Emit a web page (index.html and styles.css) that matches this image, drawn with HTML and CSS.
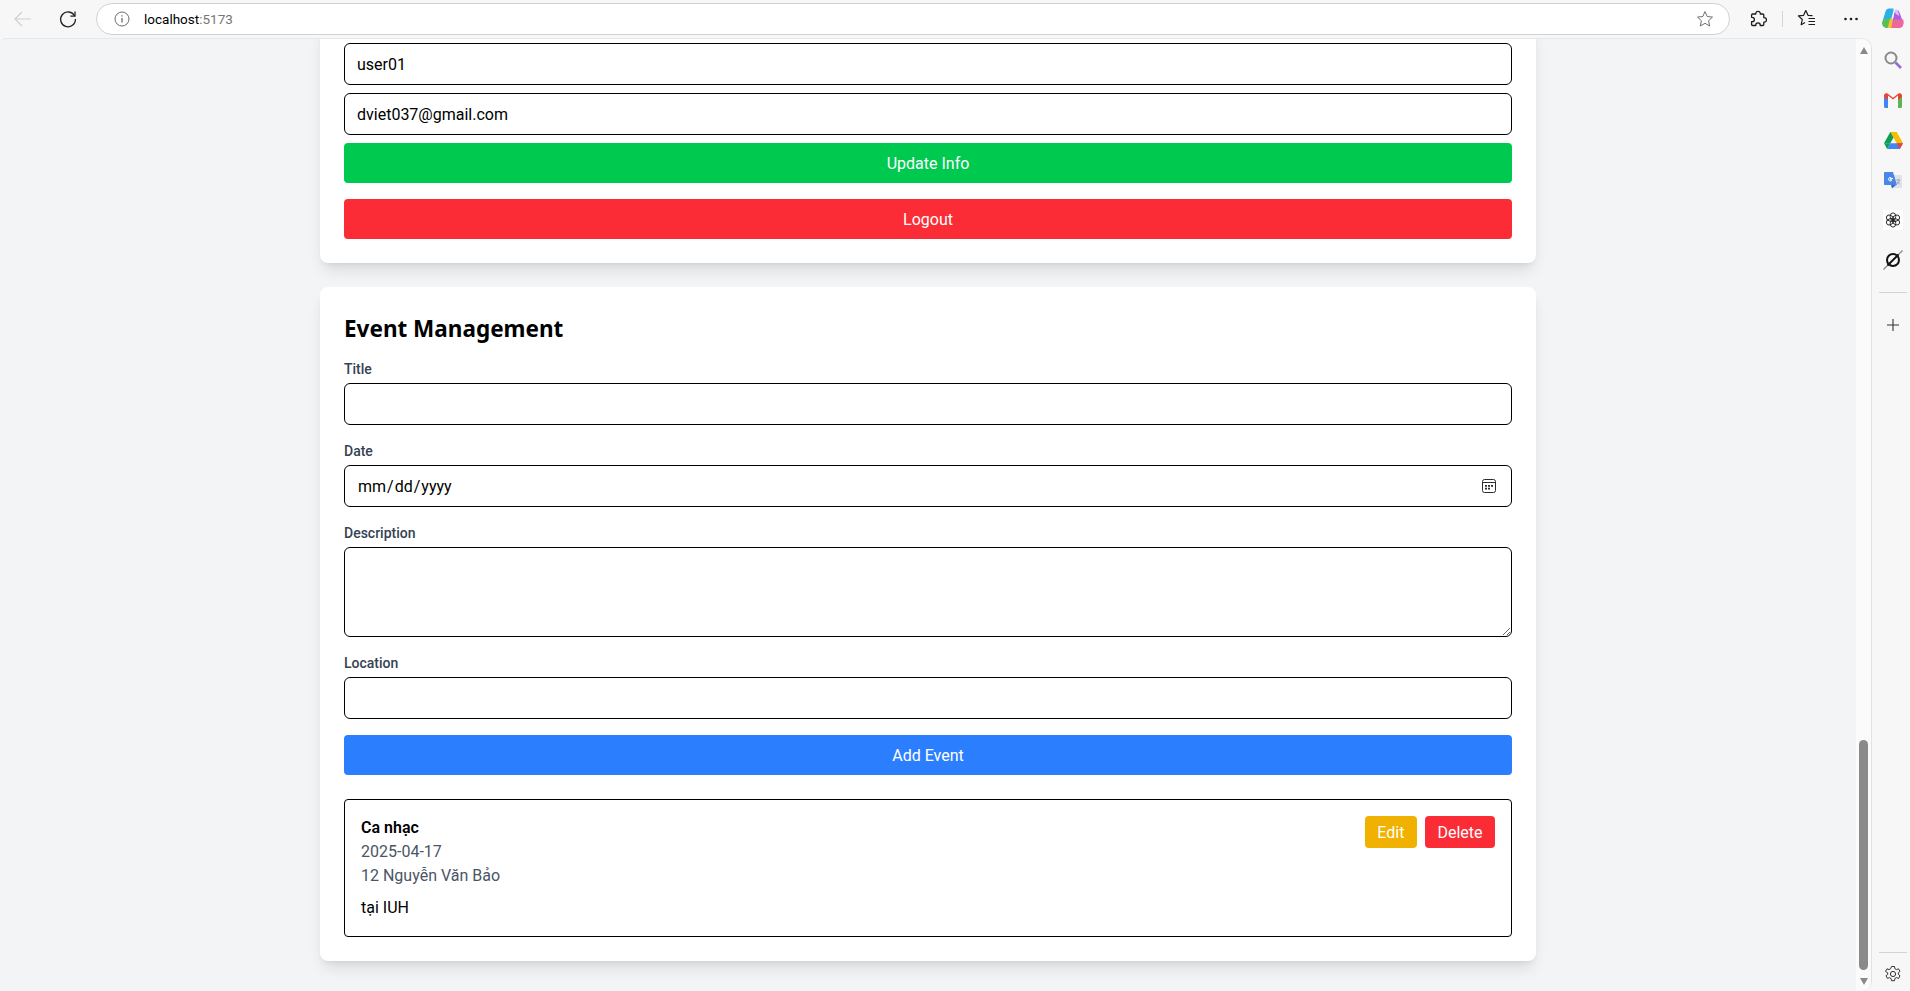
FILE: index.html
```html
<!DOCTYPE html>
<html lang="vi">
<head>
    <meta charset="UTF-8">
    <title>localhost:5173</title>
    <link rel="stylesheet" href="styles.css">
</head>
<body>
    <!-- thanh trình duyệt -->
    <header class="toolbar">
        <span class="tool tool-back">
            <svg width="20" height="20" viewBox="0 0 20 20" fill="none" stroke="#cfcfcf" stroke-width="1.2"><path d="M18 10H2M9 3l-7 7 7 7"/></svg>
        </span>
        <span class="tool tool-reload">
            <svg width="20" height="20" viewBox="0 0 20 20" fill="none" stroke="#222" stroke-width="1.3"><path d="M16.600 7A7.400 7.400 0 1 0 17.400 10"/><path d="M17 2.600V7.200H12.400"/></svg>
        </span>
        <div class="address">
            <svg class="info" width="16" height="16" viewBox="0 0 16 16" fill="none" stroke="#6b6b6b" stroke-width="1"><circle cx="8" cy="8" r="7"/><path d="M8 7v4.600" stroke-width="1.300"/><path d="M8 4.200v1.400" stroke-width="1.300"/></svg>
            <span class="url">localhost<span class="url-port">:5173</span></span>
            <svg class="star" width="18" height="18" viewBox="0 0 18 18" fill="none" stroke="#6f6f6f" stroke-width="1"><path d="M9 1.600l2.200 4.900 5.300.6-3.900 3.600 1.100 5.300L9 13.300l-4.700 2.700 1.100-5.300L1.500 7.100l5.300-.6z"/></svg>
        </div>
        <span class="tool tool-ext">
            <svg width="18" height="18" viewBox="0 0 18 18" fill="none" stroke="#1c1c1c" stroke-width="1.300" stroke-linejoin="round"><path d="M6.800 3.200a2.300 2.300 0 0 1 4.500 0V4h2.500c.6 0 1 .4 1 1v2.600h.4a2.300 2.300 0 0 1 0 4.600h-.4v2.300c0 .6-.4 1-1 1h-2.600v-.5a2.200 2.200 0 0 0-4.400 0v.5H3.600c-.6 0-1-.4-1-1v-2.800h.6a2.200 2.200 0 0 0 0-4.400h-.6V5c0-.6.4-1 1-1h3.200z"/></svg>
        </span>
        <span class="tool-sep"></span>
        <span class="tool tool-favs">
            <svg width="20" height="20" viewBox="0 0 20 20" fill="none" stroke="#1c1c1c" stroke-width="1.200" stroke-linejoin="round"><path d="M15.500 6.700L11 6.300 8.800 1.500 6.600 6.300l-5.200.6 3.900 3.600-1.100 5.200 3.800-2.200"/><path d="M11.500 9.500H18M11.500 12.500H18M11.500 15.500H18"/></svg>
        </span>
        <span class="tool tool-more">
            <svg width="16" height="4" viewBox="0 0 16 4" fill="#1c1c1c"><circle cx="2.500" cy="2" r="1.300"/><circle cx="8" cy="2" r="1.300"/><circle cx="13.500" cy="2" r="1.300"/></svg>
        </span>
        <span class="tool tool-copilot">
            <svg width="22" height="22" viewBox="0 0 22 22">
                <path d="M7 0.500h5L7 20H5C1.500 20 -.5 16.500 .5 13.500L3.500 3.500C4 1.500 5.500 .5 7 .5z" fill="#2ab1e8"/>
                <path d="M.5 13.500C2 11 4.500 10.500 8 10.500L5.500 20H5C1.500 20 -.5 16.500 .5 13.500z" fill="#58c04e"/>
                <path d="M8 10.500h4.500L10 20H5.500z" fill="#f5c02c"/>
                <path d="M13 1.500c2.500 0 4 1 4.500 3L21 14c1 3-1 6-4 6H9.500z" fill="#a85fe6"/>
                <path d="M12 11.500h9.300c1.200 4-1 8.500-4.300 8.500H9.500z" fill="#f0689a"/>
                <path d="M11 .5h1.500c1.800 0 3.100 1 3.600 2.800l1.200 4.400C15 7.500 14 6 13 4.500z" fill="#ffffff" opacity=".6"/>
            </svg>
        </span>
    </header>

    <div class="workspace">
        <div class="viewport">
            <main class="page">
                <section class="card">
                    <div class="profile-form">
                        <input class="field" type="text" value="user01">
                        <input class="field" type="text" value="dviet037@gmail.com">
                        <button class="btn btn-green">Update Info</button>
                        <button class="btn btn-red btn-logout">Logout</button>
                    </div>
                </section>

                <section class="card">
                    <h2 class="card-title">Event Management</h2>
                    <form class="event-form">
                        <div class="form-row">
                            <label class="form-label">Title</label>
                            <input class="field" type="text">
                        </div>
                        <div class="form-row">
                            <label class="form-label">Date</label>
                            <div class="date-wrap">
                                <input class="field field-date" type="date">
                                <svg class="date-icon" width="14" height="14" viewBox="0 0 14 14" fill="none" stroke="#2b2b2b" stroke-width="1"><rect x=".5" y=".5" width="13" height="13" rx="2"/><path d="M.5 3.500h13"/><path d="M3 6.800h2M6 6.800h2M9 6.800h2M3 9.600h2M6 9.600h2" stroke-width="1.800"/></svg>
                            </div>
                        </div>
                        <div class="form-row">
                            <label class="form-label">Description</label>
                            <textarea class="field field-area"></textarea>
                        </div>
                        <div class="form-row">
                            <label class="form-label">Location</label>
                            <input class="field" type="text">
                        </div>
                        <button class="btn btn-blue" type="button">Add Event</button>
                    </form>

                    <article class="event">
                        <div class="event-info">
                            <h3 class="event-name">Ca nhạc</h3>
                            <p class="event-meta">2025-04-17</p>
                            <p class="event-meta">12 Nguyễn Văn Bảo</p>
                            <p class="event-desc">tại IUH</p>
                        </div>
                        <div class="event-actions">
                            <button class="btn-small btn-yellow">Edit</button>
                            <button class="btn-small btn-red">Delete</button>
                        </div>
                    </article>
                </section>
            </main>
            <div class="scrollbar">
                <span class="arrow arrow-up"></span>
                <span class="thumb"></span>
                <span class="arrow arrow-down"></span>
            </div>
        </div>

        <!-- thanh bên Edge -->
        <aside class="sidebar">
            <span class="side-item">
                <svg width="20" height="20" viewBox="0 0 20 20" fill="none"><circle cx="8" cy="8" r="5.500" stroke="#8a8a8a" stroke-width="2"/><path d="M12.500 12.500L18 18" stroke="#9a6cd8" stroke-width="2.600"/></svg>
            </span>
            <span class="side-item">
                <svg width="18" height="15" viewBox="0 0 18 15" fill="none"><path d="M0 3v10.500c0 .8.600 1.500 1.400 1.500H4V6z" fill="#4285f4"/><path d="M14 6v9h2.600c.8 0 1.400-.7 1.400-1.500V3z" fill="#5ab552"/><path d="M0 2.500C0 .6 2 -.5 3.500 .6L9 4.800 14.500 .6C16 -.5 18 .6 18 2.500V4L14 7V2.500L9 6.500 4 2.500V7L0 4z" fill="#ea4335"/></svg>
            </span>
            <span class="side-item">
                <svg width="19" height="17" viewBox="0 0 19 17"><path d="M6.300 0h6.400L6.300 11.200H0z" fill="#0f9d58"/><path d="M6.300 0h6.400l6.300 11.200h-6.400z" fill="#fbbc04"/><path d="M3.200 17L6.300 11.200H19L15.800 17z" fill="#4285f4"/><path d="M0 11.200h6.300L3.200 17z" fill="#0f9d58"/><path d="M12.700 11.200H19L15.800 17z" fill="#ea4335"/></svg>
            </span>
            <span class="side-item">
                <svg width="18" height="17" viewBox="0 0 18 17"><path d="M7 3h10c.6 0 1 .4 1 1v11c0 .6-.4 1-1 1h-7z" fill="#dfe3e8"/><path d="M1 0h8l4 13H1c-.6 0-1-.4-1-1V1c0-.6.4-1 1-1z" fill="#4a86e8"/><path d="M7 13h5l-4 3.600z" fill="#3367c8"/><path d="M9 6.500H6.300v1.300h1.500a1.700 1.700 0 1 1-.5-1.800" fill="none" stroke="#fff" stroke-width="1"/><path d="M12.500 8h3.500M14.200 7v1M15.500 8c-.4 2-1.500 3.200-3 4M13 9.500c.6 1.200 1.500 2 2.800 2.500" fill="none" stroke="#8b96a5" stroke-width=".8"/></svg>
            </span>
            <span class="side-item">
                <span class="gpt-box">
                    <svg width="16" height="16" viewBox="0 0 16 16" fill="none" stroke="#222" stroke-width=".9"><ellipse cx="8" cy="4.600" rx="2.800" ry="3.800"/><ellipse cx="8" cy="4.600" rx="2.800" ry="3.800" transform="rotate(60 8 8)"/><ellipse cx="8" cy="4.600" rx="2.800" ry="3.800" transform="rotate(120 8 8)"/><ellipse cx="8" cy="4.600" rx="2.800" ry="3.800" transform="rotate(180 8 8)"/><ellipse cx="8" cy="4.600" rx="2.800" ry="3.800" transform="rotate(240 8 8)"/><ellipse cx="8" cy="4.600" rx="2.800" ry="3.800" transform="rotate(300 8 8)"/></svg>
                </span>
            </span>
            <span class="side-item">
                <svg width="20" height="20" viewBox="0 0 20 20" fill="none"><circle cx="10" cy="10" r="6" stroke="#111" stroke-width="2"/><path d="M.5 19.500L19.500 .5" stroke="#888" stroke-width="1.200"/><path d="M4.500 15.500L15.500 4.500" stroke="#111" stroke-width="1.800"/></svg>
            </span>
            <span class="side-sep"></span>
            <span class="side-item side-plus">
                <svg width="14" height="14" viewBox="0 0 14 14" stroke="#333" stroke-width="1.100"><path d="M7 1v12M1 7h12"/></svg>
            </span>
            <span class="side-sep side-sep-bottom"></span>
            <span class="side-gear">
                <svg width="18" height="18" viewBox="0 0 18 18" fill="none" stroke="#333" stroke-width="1"><circle cx="9" cy="9" r="2.600"/><path d="M7.500 1.500h3l.4 2.200 1.500.9 2.100-.8 1.500 2.600-1.700 1.400v1.600l1.700 1.400-1.500 2.600-2.100-.8-1.500.9-.4 2.200h-3l-.4-2.200-1.500-.9-2.100.8-1.500-2.600 1.700-1.400V7.800L1.500 6.400 3 3.800l2.100.8 1.500-.9z" stroke-linejoin="round"/></svg>
            </span>
        </aside>
    </div>
</body>
</html>
```

FILE: styles.css
```css
* {
    box-sizing: border-box;
}
body {
    font-family: Roboto, "Noto Sans", sans-serif;
    margin: 0;
    height: 100vh;
    display: flex;
    flex-direction: column;
    overflow: hidden;
    background: #f7f7f7;
    color: #000;
}

/* Toolbar */
.toolbar {
    height: 38px;
    flex-shrink: 0;
    display: flex;
    align-items: center;
    padding-left: 13px;
    padding-right: 6px;
}
.tool {
    display: flex;
    align-items: center;
    justify-content: center;
}
.tool-reload {
    margin-left: 25px;
}
.address {
    flex: 1;
    height: 32px;
    margin-left: 18px;
    display: flex;
    align-items: center;
    padding-left: 17px;
    padding-right: 15px;
    background: #fff;
    border: 1px solid #d2d2d2;
    border-radius: 16px;
}
.url {
    font-size: 13.500px;
    margin-left: 14px;
    flex: 1;
}
.url-port {
    color: #767676;
}
.tool-ext {
    margin-left: 19px;
}
.tool-sep {
    width: 1px;
    height: 16px;
    background: #d4d4d4;
    margin-left: 15px;
}
.tool-favs {
    margin-left: 14px;
}
.tool-more {
    margin-left: 26px;
}
.tool-copilot {
    margin-left: 23px;
}

/* Vùng nội dung */
.workspace {
    flex: 1;
    display: flex;
    min-height: 0;
}
.viewport {
    flex: 1;
    display: flex;
    min-width: 0;
    overflow: hidden;
    background: #f3f4f6;
    border-top: 1px solid #e8e8e8;
    border-right: 1px solid #e2e2e2;
    border-radius: 6px 10px 10px 0;
}
.page {
    flex: 1;
    display: flex;
    flex-direction: column;
    justify-content: flex-end;
    align-items: center;
    gap: 24px;
    padding-bottom: 30px;
    overflow: hidden;
}
.card {
    width: 1216px;
    flex-shrink: 0;
    padding: 24px;
    background: #fff;
    border-radius: 8px;
    box-shadow: 0 10px 15px -3px rgba(0,0,0,0.1), 0 4px 6px -4px rgba(0,0,0,0.1);
}
.card-title {
    font-family: "Noto Sans", sans-serif;
    font-size: 22.500px;
    line-height: 32px;
    font-weight: 700;
    margin: 2px 0 14px;
}
.profile-form {
    display: flex;
    flex-direction: column;
    gap: 8px;
}
.btn-logout {
    margin-top: 8px;
}
.event-form {
    display: flex;
    flex-direction: column;
    gap: 16px;
}
.form-label {
    display: block;
    font-size: 14px;
    line-height: 20px;
    font-weight: 500;
    color: #364153;
    margin-bottom: 4px;
}
.field {
    display: block;
    width: 100%;
    height: 42px;
    padding: 8px 12px;
    font-family: inherit;
    font-size: 16px;
    color: #000;
    background: #fff;
    border: 1px solid #000;
    border-radius: 6px;
    outline: none;
}
.field-area {
    height: 90px;
    resize: vertical;
}
.date-wrap {
    position: relative;
}
.field-date::-webkit-calendar-picker-indicator {
    opacity: 0;
}
.date-icon {
    position: absolute;
    top: 14px;
    right: 16px;
    pointer-events: none;
}
.btn {
    height: 40px;
    width: 100%;
    border: 0;
    border-radius: 4px;
    color: #fff;
    font-family: inherit;
    font-size: 16px;
}
.btn-green {
    background: #00c950;
}
.btn-red {
    background: #fb2c36;
}
.btn-blue {
    background: #2b7fff;
}
.btn-yellow {
    background: #f0b100;
}

/* Sự kiện */
.event {
    margin-top: 24px;
    padding: 16px;
    display: flex;
    justify-content: space-between;
    align-items: flex-start;
    border: 1px solid #000;
    border-radius: 4px;
}
.event-name {
    font-size: 16px;
    line-height: 24px;
    font-weight: 600;
    margin: 0;
}
.event-meta {
    font-size: 16px;
    line-height: 24px;
    color: #4a5565;
    margin: 0;
}
.event-desc {
    font-size: 16px;
    line-height: 24px;
    margin: 8px 0 0;
}
.event-actions {
    display: flex;
    gap: 8px;
}
.btn-small {
    height: 32px;
    padding: 0 12.500px;
    border: 0;
    border-radius: 4px;
    color: #fff;
    font-family: inherit;
    font-size: 16px;
}

/* Scrollbar */
.scrollbar {
    width: 15px;
    flex-shrink: 0;
    display: flex;
    flex-direction: column;
    align-items: center;
    padding-top: 8px;
    padding-bottom: 6px;
    background: #fbfbfb;
}
.arrow {
    width: 0;
    height: 0;
    border-left: 4.500px solid transparent;
    border-right: 4.500px solid transparent;
}
.arrow-up {
    border-bottom: 7px solid #8a8a8a;
}
.arrow-down {
    border-top: 7px solid #8a8a8a;
    margin-top: 8px;
}
.thumb {
    width: 9px;
    height: 230px;
    margin-top: auto;
    border-radius: 5px;
    background: #8a8a8a;
}

/* Sidebar */
.sidebar {
    width: 38px;
    flex-shrink: 0;
    display: flex;
    flex-direction: column;
    align-items: center;
    padding-top: 2px;
    padding-left: 4px;
}
.side-item {
    height: 40px;
    flex-shrink: 0;
    display: flex;
    align-items: center;
    justify-content: center;
}
.gpt-box {
    width: 20px;
    height: 20px;
    background: #fff;
    display: flex;
    align-items: center;
    justify-content: center;
}
.side-sep {
    width: 28px;
    height: 1px;
    margin-top: 12px;
    flex-shrink: 0;
    background: #d4d4d4;
}
.side-plus {
    margin-top: 12px;
}
.side-sep-bottom {
    margin-top: auto;
}
.side-gear {
    height: 38px;
    padding-top: 4px;
    display: flex;
    align-items: center;
    justify-content: center;
}
```
